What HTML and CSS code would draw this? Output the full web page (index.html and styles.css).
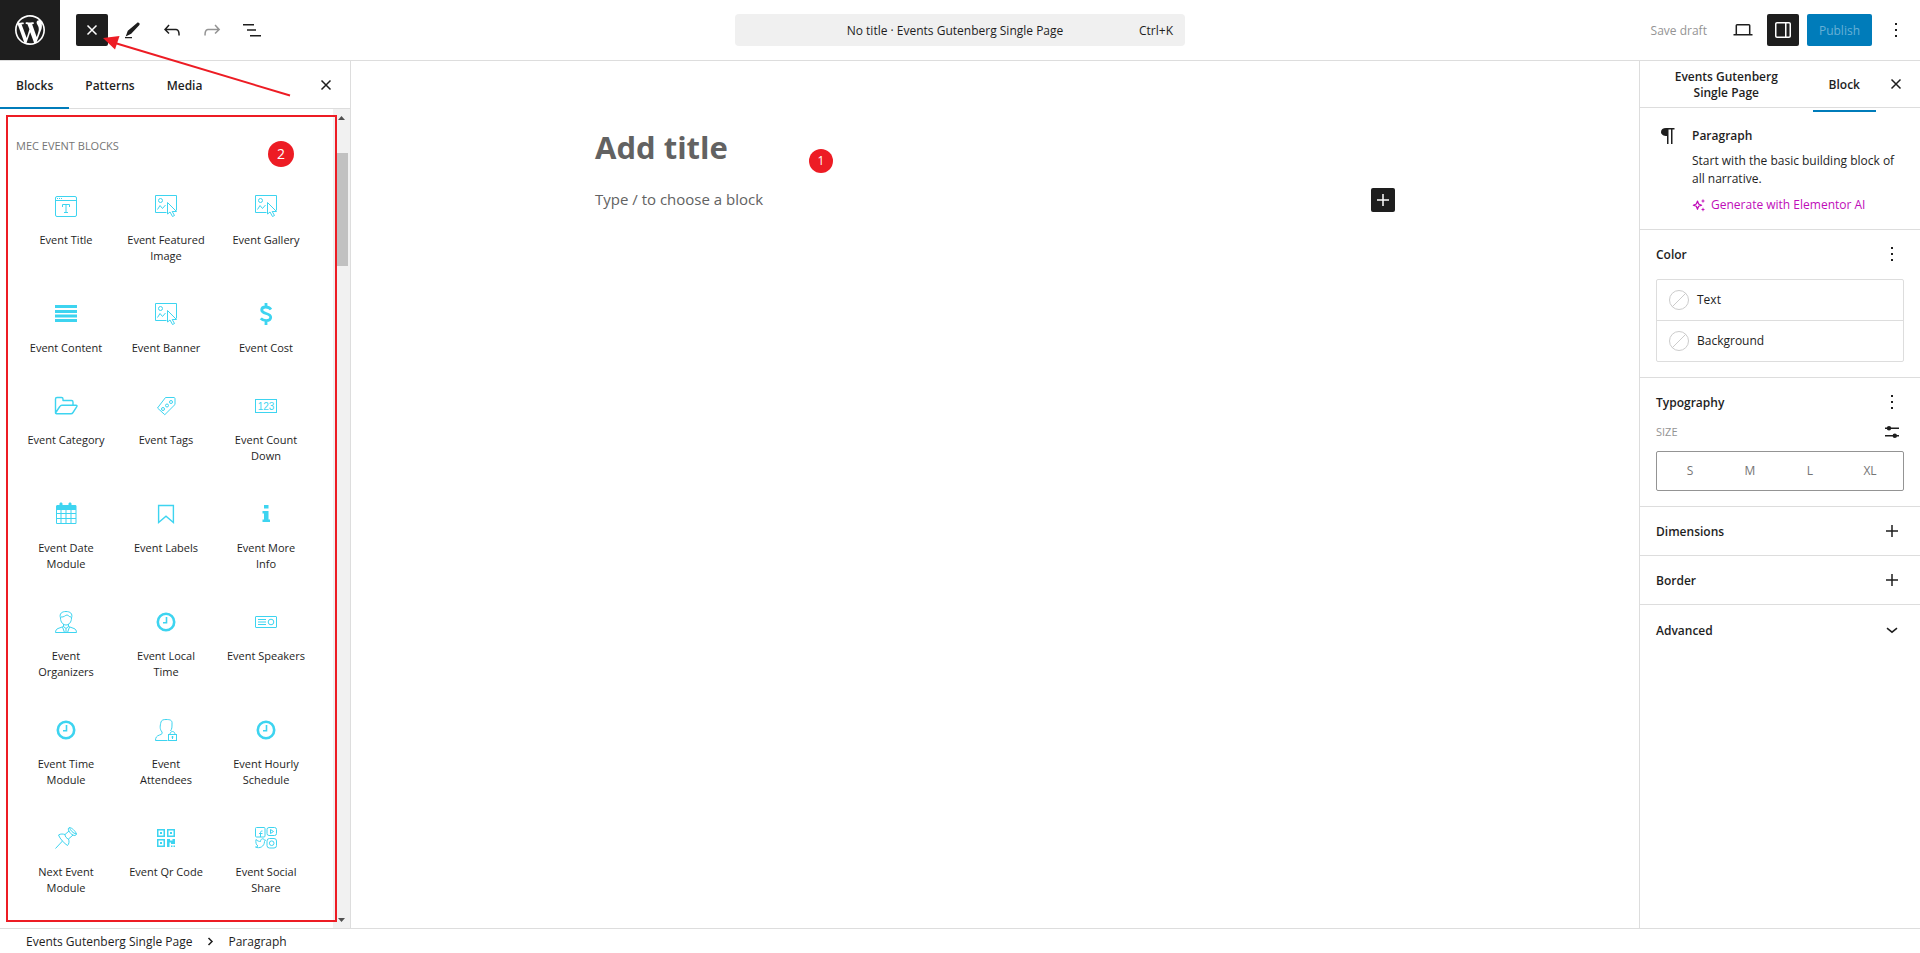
FILE: index.html
```html
<!DOCTYPE html>
<html lang="en">
<head>
    <meta charset="UTF-8">
    <meta name="viewport" content="width=device-width, initial-scale=1.0">
    <title>Edit Page</title>
    <link rel="stylesheet" href="styles.css">
</head>
<body>
    <!-- shared block icons -->
    <svg class="sprite" width="0" height="0" aria-hidden="true">
        <symbol id="icon-image" viewBox="0 0 24 24">
            <path fill="none" stroke="currentColor" d="M12.500 18.500h-11v-17h21v15M3.500 15.500l2.500-4 2.500 3 3-3.500"/>
            <circle cx="6.500" cy="6.500" r="2" fill="none" stroke="currentColor"/>
            <path fill="none" stroke="currentColor" d="M13.500 8.500V20l2.500-2 2.500 4.500 2-1-2.300-4h4.300z"/>
        </symbol>
        <symbol id="icon-clock" viewBox="0 0 24 24">
            <circle cx="12" cy="12" r="8.200" fill="none" stroke="currentColor" stroke-width="2.600"/>
            <path fill="none" stroke="currentColor" stroke-width="1.600" d="M12.500 7v5.800H9"/>
        </symbol>
        <symbol id="icon-close" viewBox="0 0 24 24">
            <path fill="none" stroke="currentColor" stroke-width="1.500" d="M7.500 7.500l9 9m0-9l-9 9"/>
        </symbol>
        <symbol id="icon-more" viewBox="0 0 24 24">
            <path fill="currentColor" d="M11 5h2v2h-2zM11 11h2v2h-2zM11 17h2v2h-2z"/>
        </symbol>
        <symbol id="icon-plus" viewBox="0 0 24 24">
            <path fill="none" stroke="currentColor" stroke-width="1.500" d="M12 6v12M6 12h12"/>
        </symbol>
    </svg>

    <header class="header">
        <div class="header-left">
            <a class="wp-logo" href="#" aria-label="View Pages">
                <svg width="36" height="36" viewBox="-2 -2 24 24"><path fill="#fff" d="M20 10c0-5.510-4.490-10-10-10C4.480 0 0 4.490 0 10c0 5.520 4.480 10 10 10 5.510 0 10-4.480 10-10zM7.780 15.370L4.370 6.220c.55-.02 1.170-.08 1.170-.08.5-.06.44-1.130-.06-1.110 0 0-1.450.11-2.370.11-.18 0-.37 0-.58-.01C4.120 2.690 6.870 1.110 10 1.110c2.330 0 4.450.87 6.050 2.340-.68-.11-1.650.39-1.650 1.580 0 .74.450 1.360.9 2.100.350.61.550 1.360.550 2.460 0 1.490-1.400 5-1.400 5l-3.030-8.370c.54-.02.82-.17.82-.17.5-.05.44-1.250-.06-1.220 0 0-1.440.12-2.380.12-.87 0-2.330-.12-2.330-.12-.5-.03-.56 1.200-.06 1.220l.92.080 1.260 3.410zM17.410 10c.24-.64.740-1.870.430-4.250.7 1.290 1.050 2.710 1.050 4.250 0 3.290-1.730 6.240-4.400 7.780.97-2.590 1.940-5.200 2.920-7.780zM6.100 18.090C3.120 16.650 1.110 13.530 1.110 10c0-1.300.230-2.480.720-3.590C3.250 10.300 4.670 14.200 6.100 18.090zm4.030-6.630l2.580 6.980c-.86.290-1.760.450-2.710.450-.79 0-1.570-.11-2.290-.33.81-2.380 1.620-4.740 2.420-7.100z"/></svg>
            </a>
            <button class="tool tool-dark" aria-label="Close block inserter"><svg width="24" height="24"><use href="#icon-close"/></svg></button>
            <button class="tool" aria-label="Tools"><svg width="24" height="24" viewBox="0 0 24 24"><path fill="currentColor" d="M17 5c1.200-1.200 3.500.6 2.400 2.100l-8.200 8.700-5.500 2.600 2.100-5.600zM5 19h7v1.300H5z"/></svg></button>
            <button class="tool" aria-label="Undo"><svg width="24" height="24" viewBox="0 0 24 24"><path fill="currentColor" d="M18.300 11.700c-.6-.6-1.400-.9-2.300-.9H6.700l2.900-3.300-1.100-1-4.500 5L8.500 16l1-1-2.700-2.700H16c.5 0 .9.200 1.300.5 1 1 1 3.400 1 4.500v.3h1.500v-.2c0-1.500 0-4.300-1.500-5.700z"/></svg></button>
            <button class="tool" aria-label="Redo" disabled><svg width="24" height="24" viewBox="0 0 24 24"><path fill="currentColor" d="M15.600 6.500l-1.100 1 2.900 3.300H8c-.9 0-1.700.3-2.300.9-1.400 1.500-1.400 4.200-1.400 5.600v.2h1.500v-.3c0-1.100 0-3.500 1-4.500.3-.3.700-.5 1.300-.5h9.200L14.500 15l1.100 1.100 4.600-4.600-4.600-5z"/></svg></button>
            <button class="tool" aria-label="Document Overview"><svg width="24" height="24" viewBox="0 0 24 24"><path fill="currentColor" d="M3 6h11v1.500H3zM7 11.300h9v1.500H7zM10 17h11v1.500H10z"/></svg></button>
        </div>
        <button class="document-bar">
            <span class="document-title">No title · Events Gutenberg Single Page</span>
            <span>Ctrl+K</span>
        </button>
        <div class="header-right">
            <button class="save-draft" disabled>Save draft</button>
            <button class="tool" aria-label="View"><svg width="24" height="24" viewBox="0 0 24 24"><path fill="none" stroke="currentColor" stroke-width="1.500" d="M5.300 16V7.500c0-.5.300-.8.800-.8h11.800c.5 0 .8.300.8.800V16M2.500 16.800h19"/></svg></button>
            <button class="tool tool-dark" aria-label="Settings"><svg width="24" height="24" viewBox="0 0 24 24"><path fill="currentColor" fill-rule="evenodd" d="M18 4H6c-1.100 0-2 .9-2 2v12c0 1.100.9 2 2 2h12c1.100 0 2-.9 2-2V6c0-1.100-.9-2-2-2zm-4 14.500H6c-.3 0-.5-.2-.5-.5V6c0-.3.200-.5.500-.5h8v13zm4.500-.5c0 .3-.2.500-.5.500h-2.500v-13H18c.3 0 .5.200.5.500v12z"/></svg></button>
            <button class="publish">Publish</button>
            <button class="tool" aria-label="Options"><svg width="24" height="24"><use href="#icon-more"/></svg></button>
        </div>
    </header>

    <div class="workspace">
        <aside class="inserter">
            <div class="inserter-tabs">
                <button class="tab tab-active">Blocks</button>
                <button class="tab">Patterns</button>
                <button class="tab">Media</button>
                <button class="close" aria-label="Close"><svg width="24" height="24"><use href="#icon-close"/></svg></button>
            </div>
            <div class="inserter-body">
                <div class="inserter-list">
                    <h2 class="category">MEC Event Blocks</h2>
                    <div class="block-grid">
                        <button class="block-item">
                            <svg width="24" height="24" viewBox="0 0 24 24"><rect x="1.500" y="2.500" width="21" height="20" rx="1.500" fill="none" stroke="currentColor"/><path fill="none" stroke="currentColor" d="M1.500 6.500h21M3 4.500h1m1 0h1m1 0h1M8.500 13v-2.500h7V13M12 10.500v8M10 18.500h4"/></svg>
                            <span>Event Title</span>
                        </button>
                        <button class="block-item">
                            <svg width="24" height="24"><use href="#icon-image"/></svg>
                            <span>Event Featured Image</span>
                        </button>
                        <button class="block-item">
                            <svg width="24" height="24"><use href="#icon-image"/></svg>
                            <span>Event Gallery</span>
                        </button>
                        <button class="block-item">
                            <svg width="24" height="24" viewBox="0 0 24 24"><path fill="currentColor" d="M1 3h22v3H1zM1 8h22v3H1zM1 12.500h22v3H1zM1 17h22v3H1z"/></svg>
                            <span>Event Content</span>
                        </button>
                        <button class="block-item">
                            <svg width="24" height="24"><use href="#icon-image"/></svg>
                            <span>Event Banner</span>
                        </button>
                        <button class="block-item">
                            <svg width="24" height="24" viewBox="0 0 24 24"><path fill="none" stroke="currentColor" stroke-width="2.800" d="M17 7.500C15.500 5.500 13.500 5 11.700 5 9.500 5 7.700 6 7.700 8c0 4.500 9 2.500 9 7.300 0 2.300-2 3.300-4.500 3.300-2.200 0-4-.7-5.400-2.300M12 1v4M12 18.500V23"/></svg>
                            <span>Event Cost</span>
                        </button>
                        <button class="block-item">
                            <svg width="24" height="24" viewBox="0 0 24 24"><path fill="none" stroke="currentColor" stroke-width="1.400" stroke-linejoin="round" d="M1.500 19V5c0-1 .5-1.500 1.500-1.500h4.500c1 0 1.500.5 1.500 1.500v1.500h8.500c1 0 1.500.5 1.500 1.500v3M1.500 19l4.300-6.500c.5-.8 1-1.200 2-1.200H22c1 0 1.300.5.800 1.300L19 18.500c-.5.800-1.200 1.200-2 1.200H2.500c-.7 0-1-.3-1-.7z"/></svg>
                            <span>Event Category</span>
                        </button>
                        <button class="block-item">
                            <svg width="24" height="24" viewBox="0 0 24 24"><path fill="none" stroke="currentColor" d="M11.500 3.500h8.500c.5 0 1 .5 1 1v6L10.800 20.700 3.500 14z"/><g fill="none" stroke="currentColor"><circle cx="9" cy="15" r="1.500"/><circle cx="13" cy="11.500" r="1.500"/><circle cx="17" cy="8" r="1.500"/></g></svg>
                            <span>Event Tags</span>
                        </button>
                        <button class="block-item">
                            <svg width="24" height="24" viewBox="0 0 24 24"><rect x="1.500" y="5.500" width="21" height="13" fill="none" stroke="currentColor"/><text x="12" y="15.500" text-anchor="middle" class="icon-digits">123</text></svg>
                            <span>Event Count Down</span>
                        </button>
                        <button class="block-item">
                            <svg width="24" height="24" viewBox="0 0 24 24"><path fill="currentColor" fill-rule="evenodd" d="M4 3h1.500V2c0-1 .5-1.500 1.500-1.500S8.500 1 8.500 2v1h6V2c0-1 .5-1.500 1.500-1.500s1.500.5 1.500 1.500v1H21c1 0 1.500.5 1.500 1.500v16c0 1-.5 1.500-1.500 1.500H3.500C2.500 22 2 21.500 2 20.500v-16C2 3.500 2.500 3 4 3zm-1 5v3h3.500V8zm4.500 0v3h4V8zm5 0v3h4V8zm5 0v3h4V8zM3 12v4h3.500v-4zm4.500 0v4h4v-4zm5 0v4h4v-4zm5 0v4h4v-4zM3 17v4h3.500v-4zm4.500 0v4h4v-4zm5 0v4h4v-4zm5 0v4h4v-4z"/></svg>
                            <span>Event Date Module</span>
                        </button>
                        <button class="block-item">
                            <svg width="24" height="24" viewBox="0 0 24 24"><path fill="none" stroke="currentColor" stroke-width="1.400" d="M4.600 3.500h14.800v17L12 14.200l-7.400 6.300z"/></svg>
                            <span>Event Labels</span>
                        </button>
                        <button class="block-item">
                            <svg width="24" height="24" viewBox="0 0 24 24"><path fill="currentColor" d="M10 3h4.500v3.500H10zM8.500 9h6v8.500H16V20H8.500v-2.500H10v-6H8.500z"/></svg>
                            <span>Event More Info</span>
                        </button>
                        <button class="block-item">
                            <svg width="24" height="24" viewBox="0 0 24 24"><g fill="none" stroke="currentColor"><path d="M6.500 8C5 3.500 8 1.500 12 1.500S19 3.500 17.500 8c0 4-2.500 7-5.500 7S6.500 12 6.500 8zM7 7c3 .5 4.500-2 6-2s2 2 4 2M9.500 14v2.500L4 18.500c-1.500.5-2.500 2-2.500 4h21c0-2-1-3.500-2.500-4l-5.500-2V14"/><path d="M9.500 16.500l2.500 2 2.500-2M8.500 17l2 5.500m5-5.500l-2 5.500M12 18.500v4"/></g></svg>
                            <span>Event Organizers</span>
                        </button>
                        <button class="block-item">
                            <svg width="24" height="24"><use href="#icon-clock"/></svg>
                            <span>Event Local Time</span>
                        </button>
                        <button class="block-item">
                            <svg width="24" height="24" viewBox="0 0 24 24"><rect x="1.500" y="6.500" width="21" height="11" rx=".5" fill="none" stroke="currentColor"/><path stroke="currentColor" d="M4 9.500h8M4 12h8M4 14.500h8"/><circle cx="17" cy="12" r="2.800" fill="none" stroke="currentColor"/></svg>
                            <span>Event Speakers</span>
                        </button>
                        <button class="block-item">
                            <svg width="24" height="24"><use href="#icon-clock"/></svg>
                            <span>Event Time Module</span>
                        </button>
                        <button class="block-item">
                            <svg width="24" height="24" viewBox="0 0 24 24"><g fill="none" stroke="currentColor"><path d="M13.500 22.500h-12c0-3 1-4.500 4-5.500 2.500-.7 3-1.500 2.500-3C5.500 11 6 8 7 4c.5-2 2.500-2.500 5-2.500 4 0 6.500.5 6 4.500 0 3 0 5-1.500 7"/><rect x="14.500" y="16.500" width="8" height="6"/><path d="M16 16.500c0-4 5-4 5 0M18.500 18v3M17.500 19h2"/></g></svg>
                            <span>Event Attendees</span>
                        </button>
                        <button class="block-item">
                            <svg width="24" height="24"><use href="#icon-clock"/></svg>
                            <span>Event Hourly Schedule</span>
                        </button>
                        <button class="block-item">
                            <svg width="24" height="24" viewBox="0 0 24 24"><path fill="none" stroke="currentColor" stroke-linejoin="round" d="M1.500 22.500l7-7.500M4.500 9c2-1.500 5-1 6.500-.5l4-3.500c-1-1.500-1-3 .5-3.500 2 0 6 3.500 7 6.500-.5 1.500-2 2-3.500 1L14.500 13c1 2.500.5 5-1 6.500C10.500 17.500 6 13 4.500 9zM11 8.500c0 2 1.500 4 3.500 4.500M15 5c.5 1.500 2.500 3.500 4 4M15.500 1.500c.5 2.500 3.500 6 7 6.500"/></svg>
                            <span>Next Event Module</span>
                        </button>
                        <button class="block-item">
                            <svg width="24" height="24" viewBox="0 0 24 24"><path fill="currentColor" fill-rule="evenodd" d="M3 3h8v8H3zm1.500 1.500v5h5v-5zM6 6h2v2H6zM13 3h8v8h-8zm1.500 1.500v5h5v-5zM16 6h2v2h-2zM3 13h8v8H3zm1.500 1.500v5h5v-5zM6 16h2v2H6zM13 13h3v1.500h2.500V13H21v5h-4v-1.500h-1.500V21H13zM17 19.500h1.500V21H17zM19.500 19.500H21V21h-1.500z"/></svg>
                            <span>Event Qr Code</span>
                        </button>
                        <button class="block-item">
                            <svg width="24" height="24" viewBox="0 0 24 24"><g fill="none" stroke="currentColor"><rect x="1.500" y="1.500" width="9.500" height="9.500" rx="1"/><path d="M6.500 11V6.500c0-1 .5-1.500 2-1.500M5 7.500h3.500"/><rect x="13" y="1.500" width="9.500" height="8" rx="2"/><path d="M16.500 3.500v4l3-2z"/><rect x="13" y="12.500" width="9.500" height="9.500" rx="2.500"/><circle cx="17.700" cy="17.200" r="2.300"/><path d="M2 13.500c1.500 1.500 3 2 4.500 2 0-3 3-3.500 4-1.500h1l-1 1.500c0 5-5 7.500-9 5.500 1.500 0 2-.5 2.500-1-2-1-2.500-4-2-6.500z"/></g></svg>
                            <span>Event Social Share</span>
                        </button>
                    </div>
                    <span class="badge badge-list">2</span>
                </div>
                <div class="scrollbar" aria-hidden="true">
                    <svg width="17" height="17" viewBox="0 0 17 17"><path fill="#505050" d="M5 11l3.500-4 3.500 4z"/></svg>
                    <div class="scroll-thumb"></div>
                    <svg class="scroll-down" width="17" height="17" viewBox="0 0 17 17"><path fill="#505050" d="M5 7l3.500 4L12 7z"/></svg>
                </div>
                <div class="highlight"></div>
            </div>
        </aside>

        <main class="canvas">
            <div class="post">
                <h1 class="post-title">Add title</h1>
                <div class="post-row">
                    <p class="post-text">Type / to choose a block</p>
                    <button class="add-block" aria-label="Add block"><svg width="24" height="24"><use href="#icon-plus"/></svg></button>
                </div>
                <span class="badge badge-canvas">1</span>
            </div>
        </main>

        <aside class="settings">
            <div class="settings-tabs">
                <button class="settings-tab">Events Gutenberg Single Page</button>
                <button class="settings-tab settings-tab-active">Block</button>
                <button class="close" aria-label="Close Settings"><svg width="24" height="24"><use href="#icon-close"/></svg></button>
            </div>
            <section class="card">
                <svg width="24" height="24" viewBox="0 0 24 24"><path fill="currentColor" d="M18.500 4v1.500h-2V20H15V5.500h-2.500V20H11v-8C7.500 12 5 10.500 5 8s2-4 5-4z"/></svg>
                <div class="card-text">
                    <h2>Paragraph</h2>
                    <p>Start with the basic building block of all narrative.</p>
                    <a class="ai-link" href="#">
                        <svg width="14" height="14" viewBox="0 0 14 14"><path fill="none" stroke="currentColor" stroke-width="1.200" stroke-linejoin="round" d="M5.500 3l1.100 3 3 1.200-3 1.100-1.100 3-1.200-3-3-1.100 3-1.200z"/><path fill="currentColor" d="M11 .8l.6 1.600 1.600.6-1.600.6-.6 1.600-.6-1.600L8.800 3l1.600-.6zM11 9.300l.6 1.600 1.600.6-1.600.6-.6 1.600-.6-1.600-1.600-.6 1.600-.6z"/></svg>
                        Generate with Elementor AI
                    </a>
                </div>
            </section>
            <section class="panel">
                <div class="panel-head">
                    <h2>Color</h2>
                    <button class="close" aria-label="Color options"><svg width="24" height="24"><use href="#icon-more"/></svg></button>
                </div>
                <div class="color-list">
                    <button class="color-item"><span class="swatch"></span>Text</button>
                    <button class="color-item"><span class="swatch"></span>Background</button>
                </div>
            </section>
            <section class="panel">
                <div class="panel-head">
                    <h2>Typography</h2>
                    <button class="close" aria-label="Typography options"><svg width="24" height="24"><use href="#icon-more"/></svg></button>
                </div>
                <div class="size-head">
                    <span>Size</span>
                    <button class="close" aria-label="Set custom size"><svg width="24" height="24" viewBox="0 0 24 24"><path stroke="currentColor" stroke-width="1.500" d="M5 8.300h14M5 15.700h14"/><circle cx="9" cy="8.300" r="2.200" fill="currentColor"/><circle cx="14.800" cy="15.700" r="2.200" fill="currentColor"/></svg></button>
                </div>
                <div class="size-group">
                    <button>S</button>
                    <button>M</button>
                    <button>L</button>
                    <button>XL</button>
                </div>
            </section>
            <button class="panel-toggle"><span>Dimensions</span> <svg width="24" height="24"><use href="#icon-plus"/></svg></button>
            <button class="panel-toggle"><span>Border</span> <svg width="24" height="24"><use href="#icon-plus"/></svg></button>
            <button class="panel-toggle"><span>Advanced</span> <svg width="24" height="24" viewBox="0 0 24 24"><path fill="none" stroke="currentColor" stroke-width="1.500" d="M7 10.200l5 4 5-4"/></svg></button>
        </aside>
    </div>

    <footer class="breadcrumb">
        <a href="#">Events Gutenberg Single Page</a>
        <svg width="24" height="24" viewBox="0 0 24 24"><path fill="none" stroke="currentColor" stroke-width="1.500" d="M10.500 8l3.500 3.500-3.500 3.500"/></svg>
        <a href="#">Paragraph</a>
    </footer>

    <svg class="arrow" width="300" height="110" viewBox="0 0 300 110" aria-hidden="true">
        <path stroke="#ed1c24" stroke-width="2" d="M290 95.500L115 43"/>
        <path fill="#ed1c24" d="M103 38l16.500-2-4.500 13.500z"/>
    </svg>
</body>
</html>
```

FILE: styles.css
```css
* {
    box-sizing: border-box;
}
body {
    margin: 0;
    height: 100vh;
    display: flex;
    flex-direction: column;
    background: #fff;
    color: #1e1e1e;
    font-family: "Segoe UI", "Open Sans", "Noto Sans", sans-serif;
    font-size: 12px;
    line-height: 16px;
    overflow: hidden;
}
h1, h2, p {
    margin: 0;
}
button {
    padding: 0;
    border: none;
    background: none;
    color: inherit;
    font: inherit;
    cursor: pointer;
}
a {
    color: inherit;
    text-decoration: none;
}
svg {
    display: block;
    flex-shrink: 0;
}
.sprite {
    position: absolute;
}

/* top bar */
.header {
    flex-shrink: 0;
    display: grid;
    grid-template-columns: 1fr 450px 1fr;
    align-items: center;
    border-bottom: 1px solid #ddd;
}
.header-left {
    display: flex;
    align-items: center;
    gap: 8px;
}
.wp-logo {
    display: flex;
    align-items: center;
    justify-content: center;
    width: 60px;
    height: 60px;
    margin-right: 8px;
    background: #1e1e1e;
}
.tool {
    display: flex;
    align-items: center;
    justify-content: center;
    width: 32px;
    height: 32px;
    border-radius: 2px;
}
.tool:disabled {
    color: #949494;
}
.tool-dark {
    background: #1e1e1e;
    color: #fff;
}
.document-bar {
    display: flex;
    align-items: center;
    height: 32px;
    padding: 2px 12px 0;
    border-radius: 4px;
    background: #f0f0f0;
}
.document-title {
    flex: 1;
    padding-left: 24px;
}
.header-right {
    display: flex;
    align-items: center;
    justify-content: flex-end;
    gap: 8px;
    padding-right: 8px;
}
.save-draft {
    height: 32px;
    padding: 2px 12px 0;
    color: #949494;
}
.publish {
    height: 32px;
    padding: 2px 12px 0;
    border-radius: 2px;
    background: #007cba;
    color: #66b0d6;
}

.workspace {
    flex: 1;
    min-height: 0;
    display: flex;
}

/* block inserter */
.inserter {
    width: 351px;
    flex-shrink: 0;
    display: flex;
    flex-direction: column;
    border-right: 1px solid #ddd;
}
.inserter-tabs {
    display: flex;
    align-items: center;
    height: 48px;
    padding-right: 12px;
    border-bottom: 1px solid #ddd;
}
.tab {
    height: 48px;
    padding: 4px 16px 0;
    border-bottom: 2px solid transparent;
    font-weight: 600;
}
.tab-active {
    border-color: #007cba;
}
.close {
    width: 24px;
    height: 24px;
    margin-left: auto;
}
.inserter-body {
    position: relative;
    flex: 1;
    min-height: 0;
    display: flex;
}
.inserter-list {
    position: relative;
    flex: 1;
    padding: 29px 16px 0;
    overflow: hidden;
}
.category {
    color: #757575;
    font-size: 11px;
    font-weight: 500;
    text-transform: uppercase;
}
.block-grid {
    display: grid;
    grid-template-columns: repeat(3, 100px);
    padding-top: 20px;
}
.block-item {
    display: flex;
    flex-direction: column;
    align-items: center;
    padding: 20px 10px 18px;
    font-size: 11px;
}
.block-item svg {
    margin-bottom: 14px;
    color: #3dd4f0;
}
.icon-digits {
    fill: currentColor;
    font-family: "Liberation Sans", Arial, sans-serif;
    font-size: 10px;
}
.scrollbar {
    width: 17px;
    display: flex;
    flex-direction: column;
    align-items: center;
    background: #f1f1f1;
}
.scroll-thumb {
    width: 13px;
    height: 113px;
    margin-top: 27px;
    background: #c1c1c1;
}
.scroll-down {
    margin-top: auto;
}

/* annotations */
.highlight {
    position: absolute;
    top: 6px;
    right: 13px;
    bottom: 6px;
    left: 6px;
    border: 2px solid #ed1c24;
    pointer-events: none;
}
.badge {
    position: absolute;
    display: flex;
    align-items: center;
    justify-content: center;
    width: 26px;
    height: 26px;
    border-radius: 50%;
    background: #ed1c24;
    color: #fff;
    font-size: 14px;
}
.badge-list {
    top: 32px;
    left: 268px;
}
.badge-canvas {
    top: 22px;
    left: 214px;
    width: 24px;
    height: 24px;
    font-size: 12px;
}
.arrow {
    position: absolute;
    top: 0;
    left: 0;
    pointer-events: none;
}

/* editor canvas */
.canvas {
    flex: 1;
    padding-top: 66px;
}
.post {
    position: relative;
    max-width: 800px;
    margin: 0 auto;
    color: #626262;
}
.post-title {
    font-size: 31px;
    line-height: 40px;
}
.post-row {
    display: flex;
    align-items: flex-start;
    justify-content: space-between;
    margin-top: 21px;
}
.post-text {
    font-size: 15px;
    line-height: 22px;
}
.add-block {
    width: 24px;
    height: 24px;
    border-radius: 2px;
    background: #1e1e1e;
    color: #fff;
}

/* settings sidebar */
.settings {
    width: 281px;
    flex-shrink: 0;
    border-left: 1px solid #ddd;
}
.settings h2 {
    font-size: 12px;
    font-weight: 600;
}
.settings-tabs {
    display: flex;
    align-items: center;
    height: 47px;
    padding-right: 12px;
    border-bottom: 1px solid #ddd;
}
.settings-tab {
    position: relative;
    flex: 1;
    height: 46px;
    padding: 2px 32px 0;
    font-weight: 600;
}
.settings-tab-active {
    flex: none;
    margin-right: 8px;
    padding: 2px 16px 0;
}
.settings-tab-active::after {
    content: "";
    position: absolute;
    right: 0;
    bottom: -5px;
    left: 0;
    height: 2px;
    background: #007cba;
}
.card {
    display: flex;
    gap: 12px;
    padding: 16px 16px 15px;
    border-bottom: 1px solid #ddd;
}
.card-text h2 {
    line-height: 24px;
}
.card-text p {
    padding: 4px 0;
    line-height: 18px;
}
.ai-link {
    display: flex;
    align-items: center;
    gap: 5px;
    padding-top: 4px;
    line-height: 18px;
    color: #c00bb9;
}
.panel {
    padding: 12px 16px 15px;
    border-bottom: 1px solid #ddd;
}
.panel-head,
.size-head {
    display: flex;
    align-items: center;
    justify-content: space-between;
}
.panel-head h2,
.panel-toggle span {
    padding-top: 2px;
}
.size-head {
    margin: 6px 0 7px;
    color: #949494;
    font-size: 11px;
    text-transform: uppercase;
}
.size-head .close {
    color: #1e1e1e;
}
.color-list {
    margin-top: 13px;
    border: 1px solid #ddd;
    border-radius: 2px;
}
.color-item {
    display: flex;
    align-items: center;
    gap: 8px;
    width: 100%;
    height: 40px;
    padding: 0 12px;
}
.color-item + .color-item {
    height: 41px;
    border-top: 1px solid #ddd;
}
.swatch {
    width: 20px;
    height: 20px;
    border: 1px solid #ccc;
    border-radius: 50%;
    background: linear-gradient(-45deg, transparent 48%, #ccc 48%, #ccc 52%, transparent 52%);
}
.size-group {
    display: grid;
    grid-template-columns: repeat(4, 1fr);
    height: 40px;
    padding: 0 3px;
    border: 1px solid #949494;
    border-radius: 2px;
    color: #757575;
}
.panel-toggle {
    display: flex;
    align-items: center;
    justify-content: space-between;
    width: 100%;
    height: 49px;
    padding: 0 16px;
    border-bottom: 1px solid #ddd;
    font-weight: 600;
}
.panel-toggle:last-child {
    border-bottom: none;
}

.breadcrumb {
    flex-shrink: 0;
    display: flex;
    align-items: center;
    gap: 6px;
    height: 25px;
    padding: 2px 26px 0;
    border-top: 1px solid #ddd;
}
```
